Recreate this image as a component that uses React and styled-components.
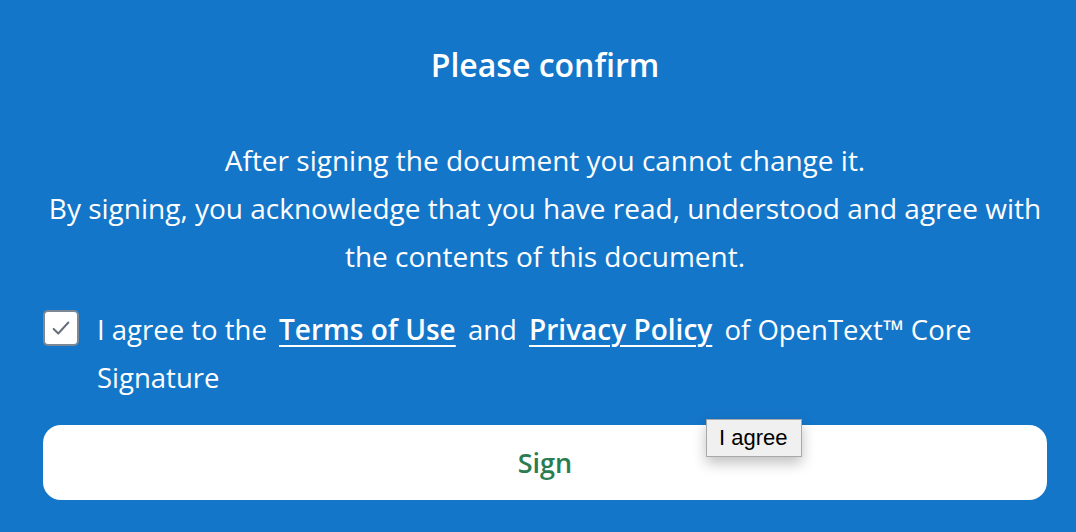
import React from 'react';
import styled, { createGlobalStyle } from 'styled-components';

const GlobalStyle = createGlobalStyle`
  html, body {
    margin: 0;
    padding: 0;
    background: #1476c9;
  }
  body {
    font-family: 'Open Sans', 'Noto Sans', sans-serif;
    color: #fff;
  }
`;

const Page = styled.div`
  width: 1076px;
  height: 532px;
  box-sizing: border-box;
  padding: 40px 29px 0 43px;
  background: #1476c9;
`;

const Title = styled.h1`
  margin: 0;
  text-align: center;
  font-size: 32px;
  font-weight: 600;
  line-height: 50px;
`;

const Message = styled.p`
  margin: 46px -20px 0;
  text-align: center;
  font-size: 28px;
  line-height: 48px;
`;

const AgreeRow = styled.label`
  display: flex;
  align-items: flex-start;
  gap: 18px;
  margin-top: 25px;
  font-size: 27.5px;
  line-height: 48px;
`;

const Box = styled.span`
  flex: none;
  width: 32px;
  height: 32px;
  margin-top: 5px;
  border: 2px solid #7c8894;
  border-radius: 5px;
  background: #fff;
  display: flex;
  align-items: center;
  justify-content: center;
`;

const Link = styled.a`
  color: #fff;
  font-size: 28px;
  font-weight: 600;
  text-decoration: underline;
  text-decoration-thickness: 2px;
  text-underline-offset: 5px;
  margin: 0 5px;
`;

const SignButton = styled.button`
  position: relative;
  display: block;
  width: 1004px;
  height: 75px;
  margin-top: 23px;
  border: none;
  border-radius: 18px;
  background: #fff;
  color: #2a7d52;
  font-family: 'Open Sans', sans-serif;
  font-size: 27px;
  font-weight: 600;
  cursor: pointer;
`;

const Tooltip = styled.span`
  position: absolute;
  left: 663px;
  top: -6px;
  padding: 5px 13px 5px 12px;
  background: #f0f0f0;
  border: 1px solid #a8a8a8;
  color: #000;
  font-family: 'Liberation Sans', Arial, sans-serif;
  font-size: 22px;
  font-weight: 400;
  line-height: 26px;
  box-shadow: 0 6px 14px rgba(0, 0, 0, 0.25);
`;

export default function App() {
  return (
    <Page>
      <GlobalStyle />
      <Title>Please confirm</Title>
      <Message>
        After signing the document you cannot change it.
        <br />
        By signing, you acknowledge that you have read, understood and agree with
        <br />
        the contents of this document.
      </Message>
      <AgreeRow>
        <Box>
          <svg width="22" height="22" viewBox="0 0 24 24" fill="none" stroke="#66717d" strokeWidth="2.2" strokeLinecap="round" strokeLinejoin="round">
            <polyline points="4,13 9,18 20,6" />
          </svg>
        </Box>
        <span>
          I agree to the <Link href="#">Terms of Use</Link> and <Link href="#">Privacy Policy</Link> of OpenText™ Core Signature
        </span>
      </AgreeRow>
      <SignButton>
        Sign
        <Tooltip>I agree</Tooltip>
      </SignButton>
    </Page>
  );
}
